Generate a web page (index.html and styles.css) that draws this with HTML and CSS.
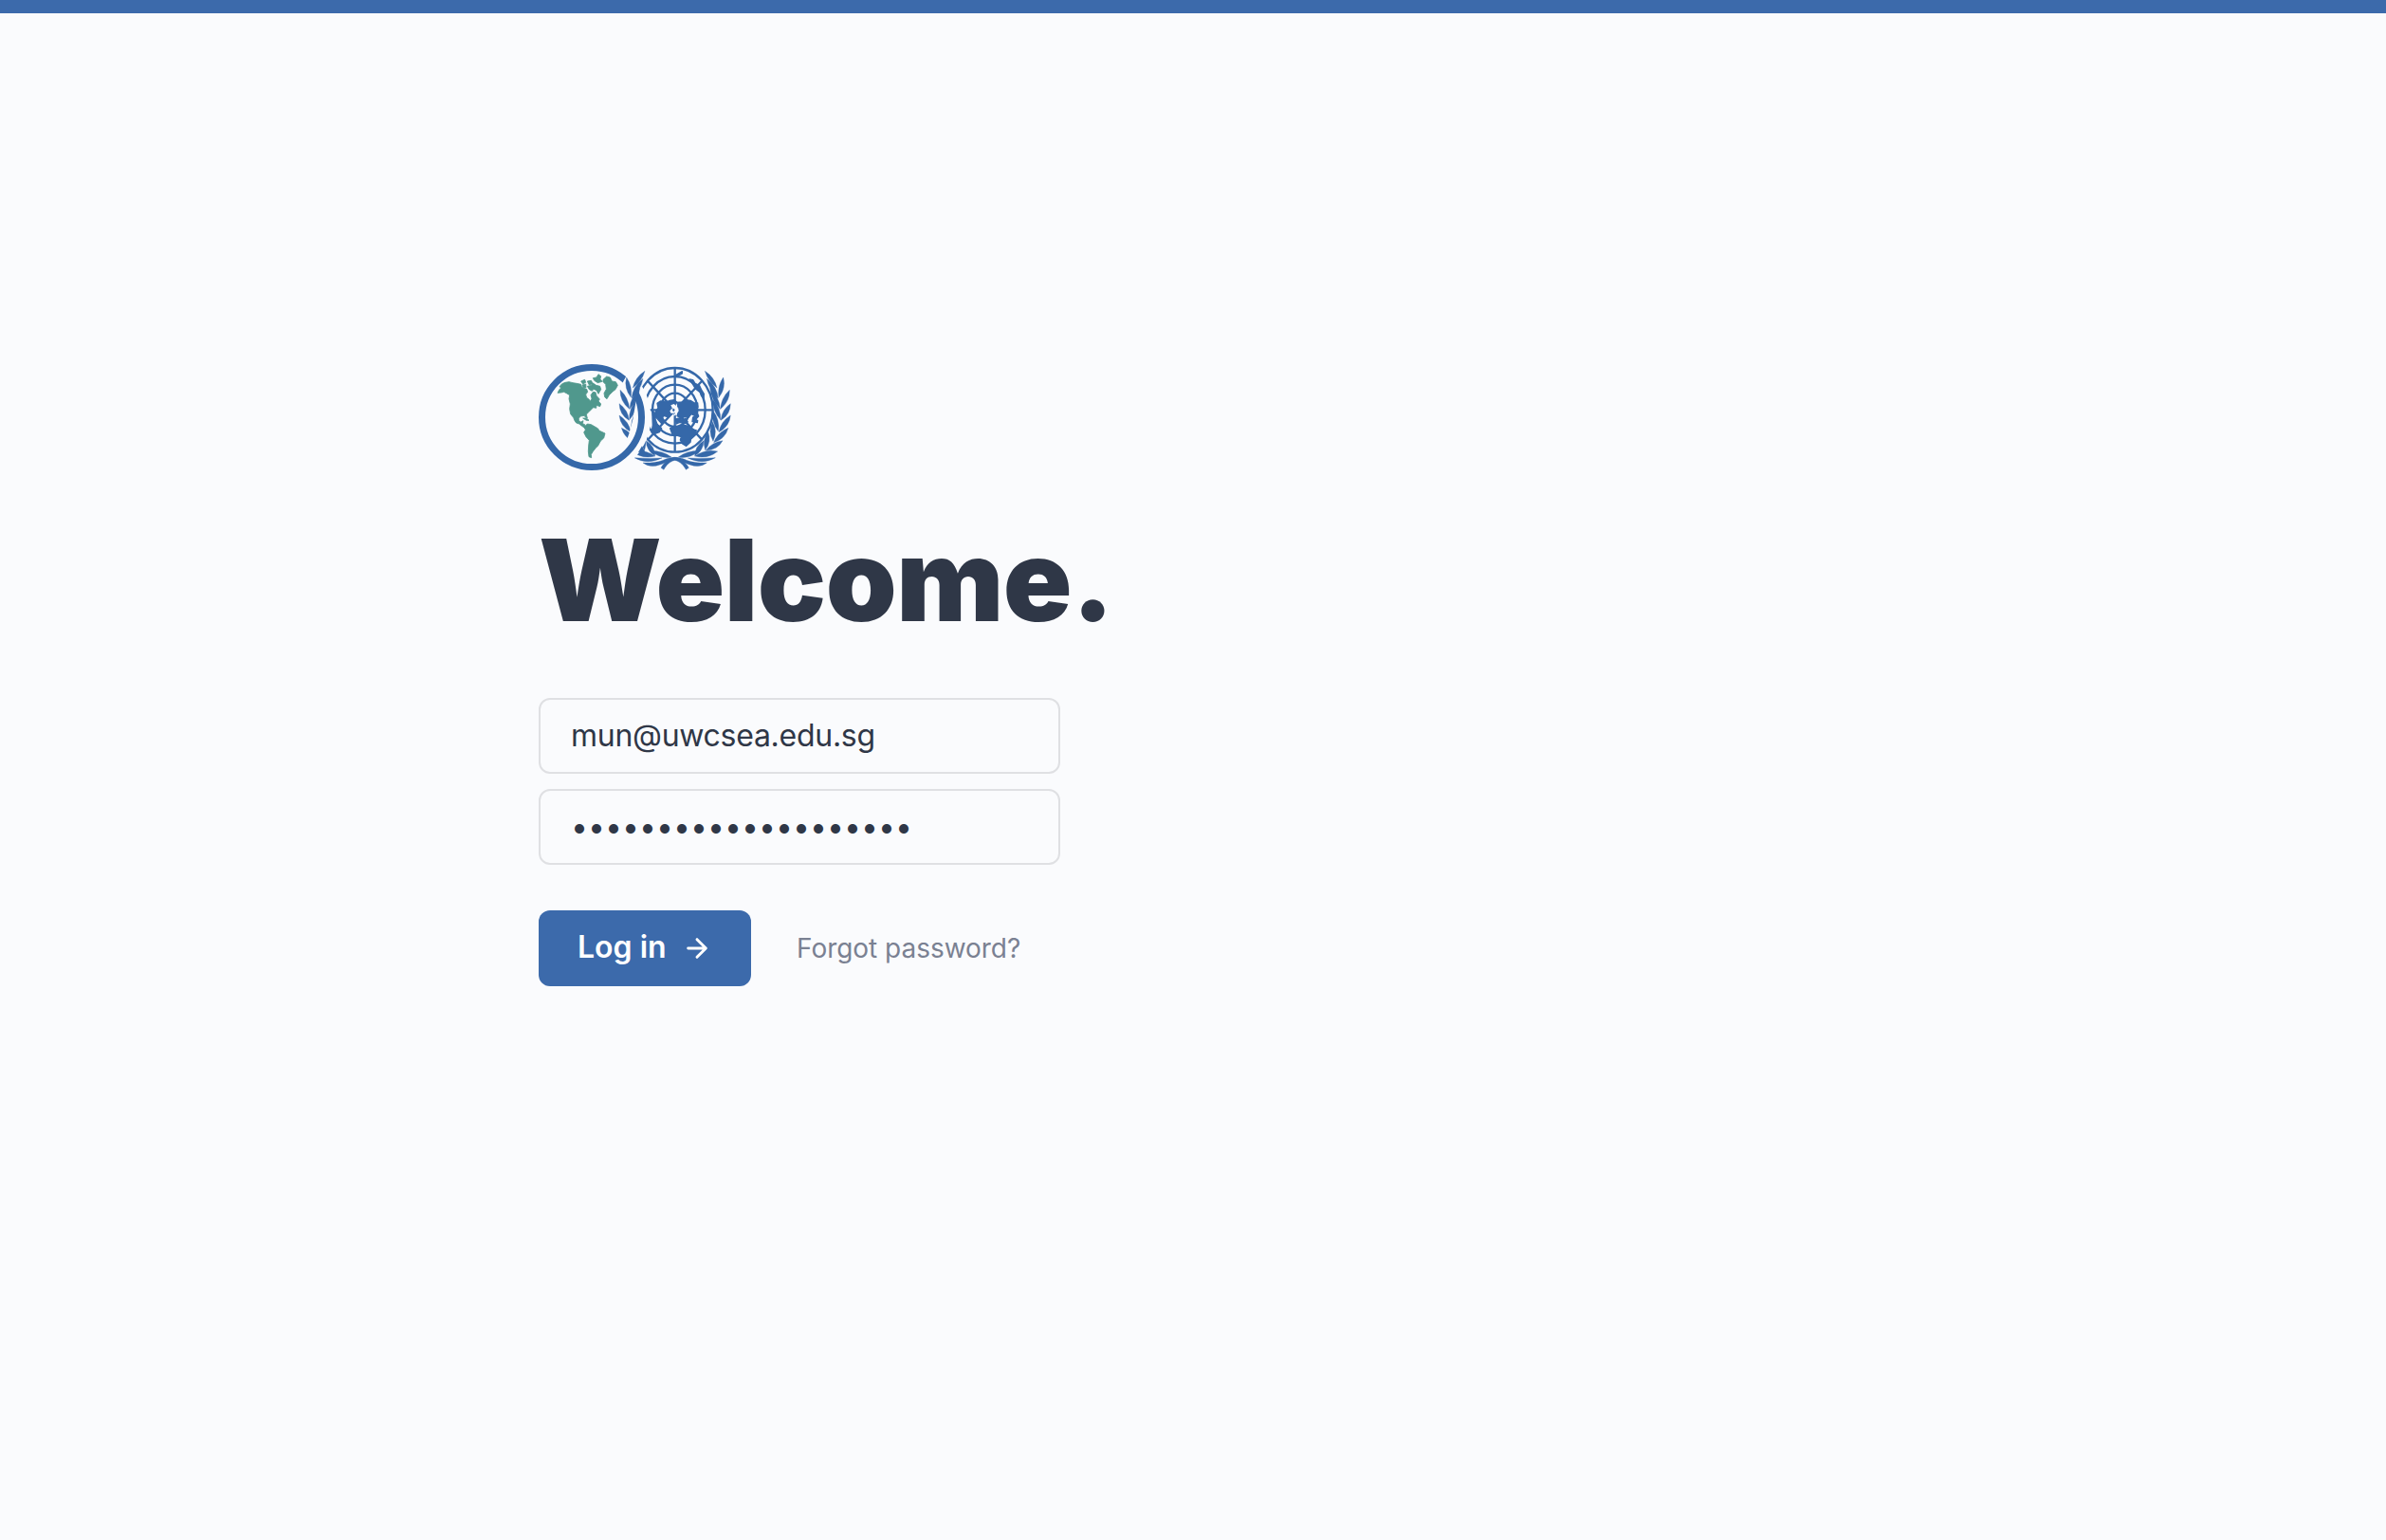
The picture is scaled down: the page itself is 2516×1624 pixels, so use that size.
FILE: index.html
```html
<!DOCTYPE html>
<html lang="en">
<head>
<meta charset="utf-8">
<title>Log in</title>
<link rel="stylesheet" href="styles.css">
</head>
<body>
<main class="page">
<section class="login">
<svg class="logo" viewBox="0 0 690 396" role="img" aria-label="Model United Nations">
  <defs>
    <g id="branch">
      <path d="M600 105Q592 71 562 52Q572 86 600 105"/>
      <path d="M606 135Q629 106 620 72Q601 100 606 135"/>
      <path d="M611 172Q641 148 640 112Q613 137 611 172"/>
      <path d="M612 208Q642 190 643 155Q615 175 612 208"/>
      <path d="M606 245Q639 228 643 192Q613 211 606 245"/>
      <path d="M590 278Q626 267 636 232Q602 246 590 278"/>
      <path d="M565 303Q602 302 618 272Q584 277 565 303"/>
      <path d="M530 321Q570 332 602 306Q563 298 530 321"/>
      <path d="M604 138Q600 101 568 76Q575 113 604 138"/>
      <path d="M610 172Q608 134 578 106Q582 144 610 172"/>
      <path d="M611 206Q613 170 587 142Q586 179 611 206"/>
      <path d="M604 242Q610 207 588 178Q581 213 604 242"/>
      <path d="M588 274Q603 242 586 212Q571 244 588 274"/>
      <path d="M563 302Q584 275 572 244Q552 271 563 302"/>
      <path d="M530 320Q558 302 558 272Q530 290 530 320"/>
      <path d="M478 324Q508 332 548 304Q508 302 478 324"/>
      <path d="M508 327Q555 350 595 326Q550 330 508 327"/>
      <path d="M467 325C500 325 505 345 568 342Q545 360 514 348C490 340 488 332 467 334C448 340 440 350 432 364L423 358C434 340 445 328 467 325"/>
    </g>
    <clipPath id="upper"><path d="M280 40H380V130L345 140L334 205L322 250L314 272H280Z"/></clipPath>
    <clipPath id="lower"><path d="M340 277H467V380H340Z"/></clipPath>
  </defs>
  <g class="grid">
    <ellipse cx="467" cy="175" rx="120" ry="133"/>
    <ellipse cx="467" cy="175" rx="96" ry="106"/>
    <ellipse cx="467" cy="175" rx="71" ry="80"/>
    <ellipse cx="467" cy="175" rx="46" ry="53"/>
    <path d="M467 42V308M350 175H587M380 82L552 268M554 82L380 271"/>
  </g>
  <g class="continents">
    <path d="M411 154L421 147L439 150L451 145L465 143L474 151L464 157L456 167L449 175L452 188L444 197L431 193L426 203L434 211L426 219L413 205L404 194L407 179L414 168Z"/>
    <path d="M473 151L491 150L501 143L516 145L527 152L539 153L540 166L530 170L538 181L530 193L519 188L510 199L498 197L488 201L474 194L477 185L483 176L478 165Z"/>
    <path d="M399 180L407 187L405 205L411 220L425 233L418 245L402 251L393 246L397 223L396 200Z"/>
    <path d="M452 233L464 226L479 229L493 222L509 226L521 235L535 240L528 254L518 263L516 277L503 289L491 282L484 270L487 260L473 255L458 250Z"/>
    <path d="M469 204L487 199L489 207L501 202L508 213L497 218L482 214L472 219Z"/>
    <path d="M524 198L540 189L542 195L530 207L539 208L538 215L522 212Z"/>
    <path d="M513 78L524 80L531 91L545 98L552 113L559 124L558 140L551 131L546 118L532 108L524 94Z"/>
    <path d="M471 64L490 53L490 60L477 67Z"/>
  </g>
  <path class="paper" d="M454 160L464 156L475 165L479 176L473 189L462 195L468 184L458 186L451 178L459 170Z"/>
  <path class="blue" d="M461 169L467 174L464 181L459 177Z"/>
  <use href="#branch" class="blue leaf"/>
  <use href="#branch" class="blue leaf" transform="translate(934 0) scale(-1 1)"/>
  <circle class="paper" cx="204" cy="198" r="187"/>
  <circle class="ring" cx="204" cy="198" r="157.5"/>
  <g clip-path="url(#lower)">
    <path class="blue" d="M351 309L363 289L372 306Z"/>
  </g>
  <path class="paper" d="M374 46L380 72L356 108L343 137L338 170L334 220L318 276L290 240L283 180L288 115L316 62Z"/>
  <g clip-path="url(#upper)"><use href="#branch" class="blue leaf" transform="translate(934 0) scale(-1 1)"/></g>
  <g class="land" transform="translate(72 48)">
    <path d="M24 73L29 63L35 57L30 53L38 44L48 40L60 38L72 41L84 43L98 46L100 53L106 58L116 61L119 70L113 78L116 88L124 94L127 100L132 91L129 80L136 70L144 71L147 82L157 93L153 99L161 108L158 116L147 112L146 121L137 119L131 125L123 133L115 141L118 153L113 151L108 145L96 147L91 154L91 161L98 165L105 161L103 170L110 173L111 180L119 184L114 187L104 180L92 171L83 168L78 161L74 151L65 140L62 124L64 108L60 92L62 80L52 74L44 70L35 72Z"/>
    <path d="M108 181L118 171L130 173L142 180L152 186L155 192L174 201L170 216L160 225L152 240L145 247L136 258L130 268L131 278L123 275L121 258L122 240L124 223L114 212L107 198L112 190Z"/>
    <path d="M168 31L179 21L190 24L196 36L208 38L214 49L207 62L198 69L187 80L180 92L173 86L171 74L178 61L176 46L168 38Z"/>
    <path d="M136 26L147 24L153 14L161 20L159 29L165 37L151 41L140 34ZM118 36L130 34L136 44L124 48ZM98 36L110 31L113 40L104 45ZM118 52L131 49L136 42L146 49L158 52L161 62L153 76L147 65L138 61L133 67L124 62ZM102 48L113 45L114 56L106 57Z"/>
    <path d="M104 153L115 153L123 160L115 160Z"/>
  </g>
</svg>
<h1 class="title">Welcome.</h1>
<form class="form">
  <input class="field" type="text" value="mun@uwcsea.edu.sg" aria-label="Email">
  <div class="field secret" role="textbox" aria-label="Password">••••••••••••••••••••</div>
  <div class="actions">
    <button class="submit" type="button"><span class="label">Log in</span>
      <svg class="arrow" viewBox="0 0 24 24"><path d="M5 12H19M12 5L19 12L12 19"/></svg>
    </button>
    <a class="forgot">Forgot password?</a>
  </div>
</form>
</section>
</main>
</body>
</html>
```
FILE: styles.css
```css
* { box-sizing: border-box; }
body { margin: 0; background: #fafbfd; color: #2f3747; font-family: Inter, "Liberation Sans", sans-serif; }
.page { min-height: 1624px; border-top: 14px solid #3c6aab; padding: 360px 0 0 568px; }
.login { display: flex; flex-direction: column; align-items: flex-start; }
.logo { display: block; width: 230px; height: 132px; margin-left: -12px; }
.blue { fill: #3568a9; }
.leaf { stroke: #3568a9; stroke-width: 1; }
.continents { fill: #3568a9; stroke: #3568a9; stroke-width: 4; stroke-linejoin: round; }
.paper { fill: #fafbfd; }
.grid { fill: none; stroke: #3568a9; stroke-width: 7; }
.ring { fill: none; stroke: #3568a9; stroke-width: 21; }
.land { fill: #50988d; stroke: #50988d; stroke-width: 2.5; stroke-linejoin: round; }
.title { margin: 34px 0 0; font-size: 120px; line-height: 144px; font-weight: 900; letter-spacing: -0.5px; white-space: nowrap; }
.form { display: flex; flex-direction: column; gap: 16px; margin-top: 52px; }
.field { width: 550px; height: 80px; margin: 0; padding: 0 32px 1px; border: 2px solid #dfe0e3; border-radius: 12px; background: #fafbfd; color: #2f3747; font: 400 32px/76px Inter, sans-serif; letter-spacing: -0.28px; outline: none; }
.secret { padding-bottom: 0; line-height: 75px; letter-spacing: 0; white-space: nowrap; }
.actions { display: flex; align-items: center; gap: 48px; margin-top: 32px; }
.submit { display: flex; align-items: center; gap: 16px; width: 224px; height: 80px; padding: 0 0 0 41px; border: 0; border-radius: 12px; background: #3c6aab; color: #fff; font: 600 32px/40px Inter, sans-serif; }
.label { padding-bottom: 2px; }
.arrow { width: 32px; height: 32px; fill: none; stroke: #fff; stroke-width: 2.2; stroke-linecap: round; stroke-linejoin: round; }
.forgot { color: #7a8192; font-size: 28px; line-height: 40px; letter-spacing: -0.03px; }
```
